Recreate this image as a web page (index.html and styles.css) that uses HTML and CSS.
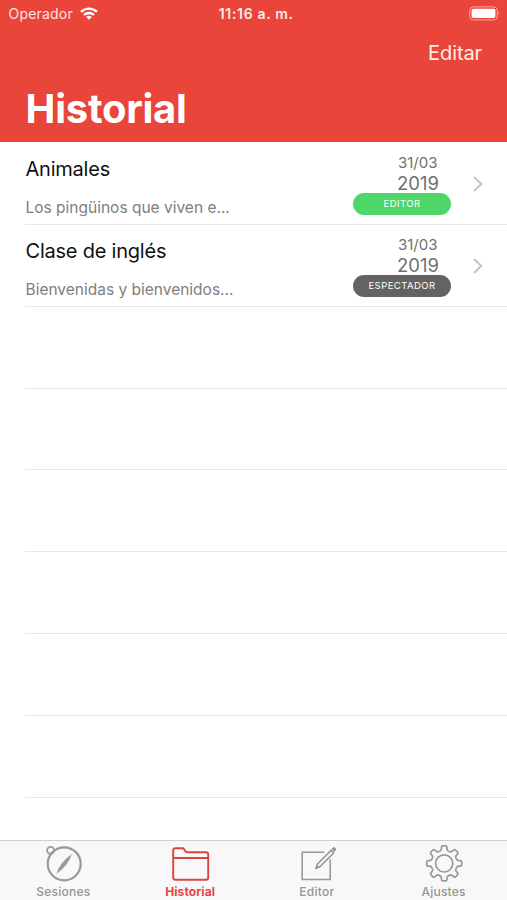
FILE: index.html
```html
<!DOCTYPE html>
<html lang="es">
<head>
<meta charset="utf-8">
<title>Historial</title>
<link rel="stylesheet" href="styles.css">
</head>
<body>
<div class="app">
  <header class="header">
    <div class="status">
      <div class="carrier"><span class="carrier-name">Operador</span>
        <svg class="wifi" width="18" height="13" viewBox="0 0 18 13" fill="none" stroke="#fff" stroke-width="2.3"><path d="M1 4.8a11.6 11.6 0 0 1 16 0M4 8a7.2 7.2 0 0 1 10 0"/><path d="M6.2 10.1a4 4 0 0 1 5.6 0L9 12.8z" fill="#fff" stroke="none"/></svg>
      </div>
      <div class="time">11:16 a. m.</div>
      <svg class="battery" width="32" height="15" viewBox="0 0 32 15"><rect x=".7" y=".9" width="27.6" height="13" rx="3.6" fill="none" stroke="#f6aaa4" stroke-width="1"/><rect x="2.6" y="2.8" width="23.8" height="9.2" rx="1.7" fill="#fff"/><path d="M29.5 5.3q1.8 2 0 4.2z" fill="#f6aaa4"/></svg>
    </div>
    <div class="nav"><span class="edit">Editar</span></div>
    <h1 class="title">Historial</h1>
  </header>
  <main class="list">
    <div class="row">
      <div class="info"><div class="name">Animales</div><div class="preview">Los pingüinos que viven e...</div></div>
      <div class="meta"><div class="day">31/03</div><div class="year">2019</div><div class="badge badge-editor">EDITOR</div></div>
      <svg class="chevron" width="12" height="18" viewBox="0 0 12 18" fill="none" stroke="#c5c5c9" stroke-width="2.1"><path d="M2 2l7.3 7L2 16"/></svg>
    </div>
    <div class="row">
      <div class="info"><div class="name">Clase de inglés</div><div class="preview">Bienvenidas y bienvenidos...</div></div>
      <div class="meta"><div class="day">31/03</div><div class="year">2019</div><div class="badge badge-viewer">ESPECTADOR</div></div>
      <svg class="chevron" width="12" height="18" viewBox="0 0 12 18" fill="none" stroke="#c5c5c9" stroke-width="2.1"><path d="M2 2l7.3 7L2 16"/></svg>
    </div>
    <div class="row"></div><div class="row"></div><div class="row"></div><div class="row"></div><div class="row"></div><div class="row"></div>
  </main>
  <nav class="tabs">
    <div class="tab">
      <svg width="40" height="40" viewBox="0 0 40 40" fill="none" stroke="#999" stroke-width="2.2"><circle cx="21.2" cy="19.8" r="16.5"/><circle cx="7.6" cy="6.3" r="3.5" stroke-width="1.8"/><path d="M28.8 10Q26.2 20.3 13.5 30Q16.2 19.3 28.8 10z" fill="#999" stroke="none"/></svg>
      <span class="label">Sesiones</span>
    </div>
    <div class="tab active">
      <svg width="40" height="40" viewBox="0 0 40 40" fill="none" stroke="#d9453e" stroke-width="1.9" stroke-linejoin="round"><path d="M3.2 33.5V6.5q0-2.3 2.3-2.3h6.8q1.2 0 1.8 1l1.1 1.9q.7 1.1 2 1.1h18.7q2.3 0 2.3 2.3v23q0 2.3-2.3 2.3H5.5q-2.3 0-2.3-2.3zM3.6 14h34"/></svg>
      <span class="label">Historial</span>
    </div>
    <div class="tab">
      <svg width="40" height="40" viewBox="0 0 40 40" fill="none" stroke="#999" stroke-width="1.6"><path d="M27.5 8.3H5.2v27.2h28V15.6"/><path d="M19.2 24.1l1.3-4.2L34 6.4l2.6 2.6L23.1 22.5z"/><path d="M35 5l1.1-1.1q1-.7 2 .3t.3 2L37.2 7.4z" fill="#999" stroke-width="1"/><path d="M18 25.3l1.6-5 3.4 3.4z" fill="#999" stroke="none"/></svg>
      <span class="label">Editor</span>
    </div>
    <div class="tab">
      <svg width="40" height="40" viewBox="0 0 40 40" fill="none" stroke="#999" stroke-width="1.7" stroke-linejoin="round"><g transform="translate(20.2 19.4)"><path d="M-3.5-12.8Q-2.8-13.4-2.8-14.8L-2.7-16.2Q-2.5-17.5-1.5-17.5H1.5Q2.5-17.5 2.7-16.2L2.8-14.8Q2.8-13.4 3.5-12.8Q5-11.8 6.6-11.5Q7.6-11.6 8.5-12.5L9.5-13.4Q10.6-14.1 11.3-13.4L13.4-11.3Q14.1-10.6 13.4-9.5L12.5-8.5Q11.6-7.6 11.5-6.6Q11.8-5 12.8-3.5Q13.4-2.8 14.8-2.8L16.2-2.7Q17.5-2.5 17.5-1.5V1.5Q17.5 2.5 16.2 2.7L14.8 2.8Q13.4 2.8 12.8 3.5Q11.8 5 11.5 6.6Q11.6 7.6 12.5 8.5L13.4 9.5Q14.1 10.6 13.4 11.3L11.3 13.4Q10.6 14.1 9.5 13.4L8.5 12.5Q7.6 11.6 6.6 11.5Q5 11.8 3.5 12.8Q2.8 13.4 2.8 14.8L2.7 16.2Q2.5 17.5 1.5 17.5H-1.5Q-2.5 17.5-2.7 16.2L-2.8 14.8Q-2.8 13.4-3.5 12.8Q-5 11.8-6.6 11.5Q-7.6 11.6-8.5 12.5L-9.5 13.4Q-10.6 14.1-11.3 13.4L-13.4 11.3Q-14.1 10.6-13.4 9.5L-12.5 8.5Q-11.6 7.6-11.5 6.6Q-11.8 5-12.8 3.5Q-13.4 2.8-14.8 2.8L-16.2 2.7Q-17.5 2.5-17.5 1.5V-1.5Q-17.5-2.5-16.2-2.7L-14.8-2.8Q-13.4-2.8-12.8-3.5Q-11.8-5-11.5-6.6Q-11.6-7.6-12.5-8.5L-13.4-9.5Q-14.1-10.6-13.4-11.3L-11.3-13.4Q-10.6-14.1-9.5-13.4L-8.5-12.5Q-7.6-11.6-6.6-11.5Q-5-11.8-3.5-12.8z"/><circle r="8.6"/></g></svg>
      <span class="label">Ajustes</span>
    </div>
  </nav>
</div>
</body>
</html>
```

FILE: styles.css
```css
* { box-sizing: border-box; }
body { margin: 0; background: #fff; font-family: Inter, "Liberation Sans", sans-serif; color: #111; }
.app { display: flex; flex-direction: column; width: 507px; height: 900px; overflow: hidden; }
.header { height: 142.3px; flex: none; background: #e9453a; color: #fff; }
.status { display: grid; grid-template-columns: 1fr auto 1fr; height: 27px; padding: 0 6px 0 8.5px; align-items: center; }
.carrier { display: flex; align-items: center; gap: 7px; font-size: 14px; color: #ffe3e0; letter-spacing: .2px; }
.wifi { flex: none; }
.time { padding-left: 3px; font-size: 14px; font-weight: 600; color: #ffeceb; letter-spacing: .68px; }
.battery { justify-self: end; }
.nav { display: flex; justify-content: flex-end; align-items: center; height: 51px; padding-right: 25px; }
.edit { font-size: 20px; line-height: 26px; color: #ffeceb; letter-spacing: -.1px; }
.title { margin: 6px 0 0 25.5px; font-size: 40px; line-height: 50px; font-weight: 700; letter-spacing: -.25px; }
.list { flex: 1; min-height: 0; }
.row { display: flex; height: 81.8px; margin-left: 25px; box-shadow: 0 1px #e9e9eb; }
.info { width: 328px; padding: 14px 0 0 .5px; white-space: nowrap; }
.name { font-size: 20px; line-height: 26px; letter-spacing: -.22px; }
.preview { margin-top: 15px; font-size: 15.5px; line-height: 22px; color: #7e7e7e; }
.meta { width: 98px; padding-top: 11px; color: #707070; }
.day { padding-right: 13.5px; font-size: 15px; line-height: 19px; text-align: right; }
.year { padding-right: 12px; font-size: 18.5px; line-height: 22px; height: 21px; text-align: right; }
.badge { display: flex; align-items: center; justify-content: center; height: 22px; padding-bottom: 1px; border-radius: 11px; color: #fff; font-size: 9.5px; letter-spacing: .45px; }
.badge-editor { background: #50d769; }
.badge-viewer { background: #636363; }
.chevron { margin: 32.5px 0 0 20.5px; }
.tabs { display: grid; grid-template-columns: repeat(4, 1fr); height: 60px; flex: none; background: #f8f8f8; border-top: 1px solid #cfcfcf; }
.tab { display: flex; flex-direction: column; align-items: center; padding-top: 3px; color: #959595; }
.label { font-size: 12px; line-height: 15px; font-weight: 500; letter-spacing: .25px; }
.active { color: #e0473f; }
.active .label { font-weight: 700; letter-spacing: .1px; }
```
